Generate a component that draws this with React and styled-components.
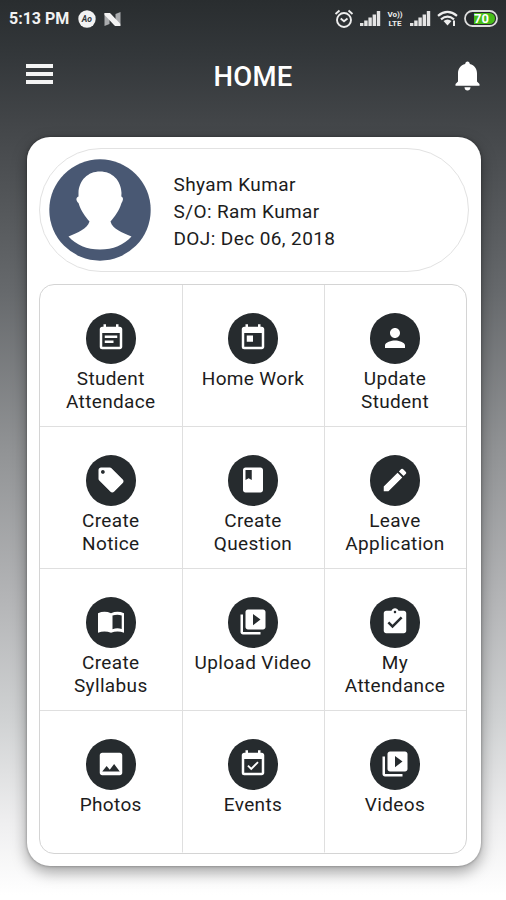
import React from 'react';
import styled, { createGlobalStyle } from 'styled-components';
import {
  MdEventNote, MdToday, MdPerson, MdLocalOffer, MdClass, MdEdit,
  MdVideoLibrary, MdAssignmentTurnedIn, MdPhoto, MdEventAvailable,
} from 'react-icons/md';

const GlobalStyle = createGlobalStyle`
  * { box-sizing: border-box; }
  body { margin: 0; font-family: Roboto, sans-serif; color: #1c1c1c; }
`;

const Screen = styled.div`
  height: 900px;
  width: 506px;
  overflow: hidden;
  background: linear-gradient(180deg, #292d2f 0, #33373a 55px, #434649 125px, #66696c 290px, #919395 450px, #b4b5b7 600px, #d0d2d3 720px, #eeeeef 820px, #fff 895px);
`;

const StatusBar = styled.header`
  height: 37px;
  padding: 0 8px 0 9px;
  display: flex;
  align-items: center;
  color: #f2f2f2;
`;

const Time = styled.span`
  width: 69px;
  font-size: 16px;
  font-weight: 700;
`;

const StatusLeft = styled.div`
  flex: 1;
  display: flex;
  gap: 8px;
`;

const StatusRight = styled.div`
  display: flex;
  align-items: center;
`;

const StatusIcon = styled.svg`
  display: block;
  flex: none;
  margin-right: ${(p) => p.$after || 0}px;
`;

const VolteBadge = styled.div`
  width: 18px;
  margin-right: 6px;
  display: flex;
  flex-direction: column;
  align-items: center;
  font-size: 8px;
  font-weight: 700;
  line-height: 9px;
  color: #ededed;
`;

const AppBar = styled.nav`
  height: 99.5px;
  padding: 0 23px 0 26px;
  display: grid;
  grid-template-columns: 80px 1fr 83px;
  align-items: start;
  color: #fff;
`;

const MenuButton = styled.button`
  width: 28px;
  margin-top: 27px;
  padding: 0;
  border: 0;
  background: none;
  display: flex;
  flex-direction: column;
  gap: 4px;
`;

const MenuLine = styled.span`
  width: 27px;
  height: 4px;
  background: #f4f4f4;
`;

const Title = styled.h1`
  margin: 23px 0 0;
  font-size: 27.5px;
  letter-spacing: 0.2px;
  line-height: 34px;
  font-weight: 500;
  text-align: center;
`;

const BellButton = styled.button`
  justify-self: end;
  margin: 24px 3px 0 0;
  padding: 0;
  border: 0;
  background: none;
  display: flex;
`;

const Card = styled.main`
  width: 454px;
  height: 729px;
  margin-left: 27px;
  padding: 11px 12px 0;
  background: #fff;
  border-radius: 23px;
  box-shadow: 0 6px 15px rgba(0, 0, 0, 0.36), 0 0 3px rgba(0, 0, 0, 0.35);
`;

const Profile = styled.section`
  height: 124px;
  border: 1.5px solid #e2e2e2;
  border-radius: 62px;
  display: flex;
  align-items: center;
  padding-left: 9px;
`;

const ProfileText = styled.div`
  margin-left: 22.5px;
  margin-top: 3px;
  font-size: 19px;
  line-height: 27px;
  letter-spacing: 0.4px;
`;

const Grid = styled.section`
  width: 428px;
  height: 570px;
  margin-top: 12px;
  border: 1.5px solid #d4d4d4;
  border-radius: 15px;
  overflow: hidden;
  display: grid;
  grid-template-columns: 142.5px 142px 142px;
  grid-template-rows: repeat(4, 142px);
`;

const Tile = styled.div`
  padding-top: 28.5px;
  border-right: 1.5px solid #dfdfdf;
  border-bottom: 1.5px solid #dfdfdf;
  display: flex;
  flex-direction: column;
  align-items: center;
  &:nth-child(3n) { border-right-color: transparent; }
  &:nth-child(n + 10) { border-bottom-color: transparent; }
`;

const Disc = styled.span`
  width: 50.5px;
  height: 50.5px;
  border-radius: 50%;
  background: #262b2e;
  color: #fff;
  font-size: 30px;
  display: flex;
  align-items: center;
  justify-content: center;
`;

const Label = styled.span`
  width: 128px;
  margin-top: 3px;
  font-size: 19px;
  line-height: 23px;
  letter-spacing: 0.35px;
  text-align: center;
  white-space: pre-line;
`;

const BellIcon = () => (
  <svg width="25" height="30" viewBox="0 0 25 30">
    <path fill="#fff" d="M12.500 0.500C13.800 0.500 14.700 1.400 14.800 3C19.500 4.200 22 8 22 12.500V20.500L24.500 23V24.700H0.500V23L3 20.500V12.500C3 8 5.500 4.200 10.200 3C10.300 1.400 11.200 0.500 12.500 0.500ZM9.500 26.200H15.500C15.500 28.200 14.200 29.500 12.500 29.500S9.500 28.200 9.500 26.200Z" />
  </svg>
);

const BookIcon = () => (
  <svg width="30" height="30" viewBox="0 0 30 30">
    <path fill="#fff" fillRule="evenodd" d="M2 6.200Q8.500 3.500 15 6.200Q21.500 3.500 28 6.200V25.700Q21.500 23.500 15 25.700Q8.500 23.500 2 25.700ZM16.500 8.600V22.200Q21 20.600 25.700 22V8.400Q21 7 16.500 8.600Z" />
  </svg>
);

const Avatar = () => (
  <svg width="102" height="102" viewBox="0 0 102 102">
    <circle cx="51" cy="51" r="50.700" fill="#495873" />
    <path fill="#fff" d="M51 12.500C63 12.500 72 21 72.500 34L72.300 37.500C75 38.500 74 42 72.500 44C70 52 65.500 58 61.500 62.500C63.500 70 73 73.500 82.500 77.500C75 86 64 90.500 51 90.500C38 90.500 27 86 19.500 77.500C29 73.500 38 70 40.500 62.500C36.500 58 32 52 29.500 44C27 42 26.500 38.500 29.500 37.500L29.500 34C30 21 39 12.500 51 12.500Z" />
  </svg>
);

const Signal = ({ after }) => (
  <StatusIcon width="21" height="17" viewBox="0 0 21 17" $after={after}>
    <g fill="#e4e4e4">
      <rect x="0" y="13" width="3.400" height="3" />
      <rect x="4.200" y="10.500" width="3.400" height="5.500" />
      <rect x="8.400" y="7.500" width="3.400" height="8.500" />
      <rect x="12.600" y="4.500" width="3.400" height="11.500" />
      <rect x="16.800" y="1" width="3.400" height="15" />
    </g>
  </StatusIcon>
);

const AlarmIcon = () => (
  <StatusIcon width="20" height="20" viewBox="0 0 20 20" $after={6}>
    <g fill="none" stroke="#ededed" strokeWidth="1.900">
      <circle cx="10" cy="11" r="7" />
      <path d="M6.700 9.500L10 12.200L13.500 9.500M1.500 5L5.500 1.500M18.500 5L14.500 1.500" />
    </g>
  </StatusIcon>
);

const WifiIcon = () => (
  <StatusIcon width="21" height="17" viewBox="0 0 21 17" $after={6}>
    <g fill="none" stroke="#ededed" strokeWidth="2.200">
      <path d="M1 5.800Q10.500 -2 20 5.800" />
      <path d="M4 9.300Q10.500 3.800 17 9.300" />
    </g>
    <path fill="#ededed" d="M6.500 11Q10.500 7.800 14.500 11L10.500 15.500ZM16 10.500H18V16H16Z" />
  </StatusIcon>
);

const BatteryIcon = () => (
  <StatusIcon width="34" height="17" viewBox="0 0 34 17">
    <rect x="1" y="1" width="32" height="15" rx="7.500" fill="#25292b" stroke="#ddd" strokeWidth="1.800" />
    <path d="M10 3H25.500A5.500 5.500 0 0 1 25.500 14H10Z" fill="#46bd17" />
    <text x="17.500" y="13.200" textAnchor="middle" fontFamily="Roboto, sans-serif" fontSize="13" fontWeight="700" fill="#fff">70</text>
  </StatusIcon>
);

const AoIcon = () => (
  <StatusIcon width="18" height="18" viewBox="0 0 18 18">
    <circle cx="9" cy="9" r="8.700" fill="#f2f2f2" />
    <text x="8.800" y="12" textAnchor="middle" fontFamily="Roboto, sans-serif" fontSize="8.500" fontStyle="italic" fontWeight="700" fill="#33373a">Ao</text>
  </StatusIcon>
);

const NougatIcon = () => (
  <StatusIcon width="17" height="18" viewBox="0 0 17 18">
    <path d="M0.500 3L5.500 5V14L0.500 16ZM11.500 4L16.500 2V14L11.500 12Z" fill="#a9abad" />
    <path d="M0.500 3H6L16.500 14V16H11L0.500 5Z" fill="#f2f2f2" />
  </StatusIcon>
);

const tiles = [
  ['Student\nAttendace', MdEventNote],
  ['Home Work', MdToday],
  ['Update\nStudent', MdPerson],
  ['Create\nNotice', MdLocalOffer],
  ['Create\nQuestion', MdClass],
  ['Leave\nApplication', MdEdit],
  ['Create\nSyllabus', BookIcon],
  ['Upload Video', MdVideoLibrary],
  ['My\nAttendance', MdAssignmentTurnedIn],
  ['Photos', MdPhoto],
  ['Events', MdEventAvailable],
  ['Videos', MdVideoLibrary],
];

export default function App() {
  return (
    <Screen>
      <GlobalStyle />
      <StatusBar>
        <Time>5:13 PM</Time>
        <StatusLeft><AoIcon /><NougatIcon /></StatusLeft>
        <StatusRight>
          <AlarmIcon />
          <Signal after={5} />
          <VolteBadge><span>Vo))</span><span>LTE</span></VolteBadge>
          <Signal after={6} />
          <WifiIcon />
          <BatteryIcon />
        </StatusRight>
      </StatusBar>
      <AppBar>
        <MenuButton aria-label="Menu"><MenuLine /><MenuLine /><MenuLine /></MenuButton>
        <Title>HOME</Title>
        <BellButton aria-label="Notifications"><BellIcon /></BellButton>
      </AppBar>
      <Card>
        <Profile>
          <Avatar />
          <ProfileText>
            <div>Shyam Kumar</div>
            <div>S/O: Ram Kumar</div>
            <div>DOJ: Dec 06, 2018</div>
          </ProfileText>
        </Profile>
        <Grid>
          {tiles.map(([label, Icon]) => (
            <Tile key={label}>
              <Disc><Icon /></Disc>
              <Label>{label}</Label>
            </Tile>
          ))}
        </Grid>
      </Card>
    </Screen>
  );
}
